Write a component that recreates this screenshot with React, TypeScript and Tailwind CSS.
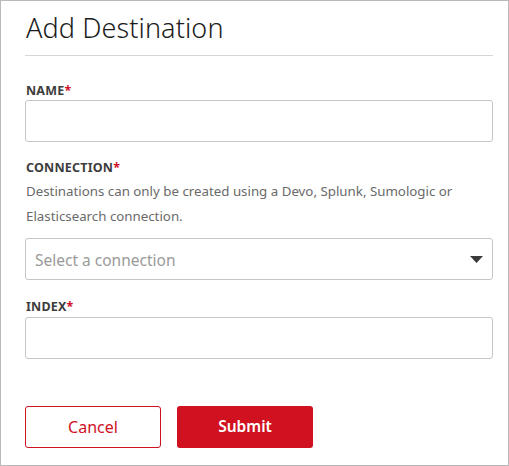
import React from "react";

const font = { fontFamily: '"Noto Sans", "Open Sans", sans-serif' };

function Label({ children }: { children: React.ReactNode }) {
  return (
    <div className="text-[12.5px] font-bold leading-[16px] tracking-[0.2px] text-[#3d3d3d]">
      {children}
      <span className="text-[#d0111f]">*</span>
    </div>
  );
}

export default function App() {
  return (
    <div
      className="w-[509px] h-[466px] border border-[#b9b9b9] bg-white pl-[24px] pr-[15px] pt-[10px] box-border"
      style={font}
    >
      <h1 className="pl-[1px] text-[27px] font-light leading-[34px] text-[#1c1c1c] tracking-[0.1px]">Add Destination</h1>
      <div className="mt-[10px] h-px bg-[#d6d6d6]" />

      <div className="mt-[27px] pl-[1px]">
        <Label>NAME</Label>
      </div>
      <div className="mt-[1px] h-[42px] rounded-[3px] border border-[#c6c6c6]" />

      <div className="mt-[18px] pl-[1px]">
        <Label>CONNECTION</Label>
      </div>
      <div className="mt-[3px] pl-[1px] text-[13.3px] leading-[25px] text-[#6a6a6a]">
        Destinations can only be created using a Devo, Splunk, Sumologic or
        <br />
        Elasticsearch connection.
      </div>
      <div className="mt-[9px] h-[42px] rounded-[3px] border border-[#c6c6c6] flex items-center justify-between pl-[9px] pr-[9px]">
        <span className="pt-[3px] text-[15.5px] text-[#9a9a9a]">Select a connection</span>
        <svg width="13" height="7" viewBox="0 0 13 7">
          <polygon points="0,0 13,0 6.5,7" fill="#3a3a3a" />
        </svg>
      </div>

      <div className="mt-[19px] pl-[1px]">
        <Label>INDEX</Label>
      </div>
      <div className="mt-[2px] h-[42px] rounded-[3px] border border-[#c6c6c6]" />

      <div className="mt-[47px] flex gap-[16px]">
        <button className="w-[136px] h-[42px] rounded-[3px] border border-[#d0111f] bg-white text-[#d0111f] text-[16px]">
          Cancel
        </button>
        <button className="w-[136px] h-[42px] rounded-[3px] bg-[#d0111f] text-white text-[15.5px] font-semibold">
          Submit
        </button>
      </div>
    </div>
  );
}
